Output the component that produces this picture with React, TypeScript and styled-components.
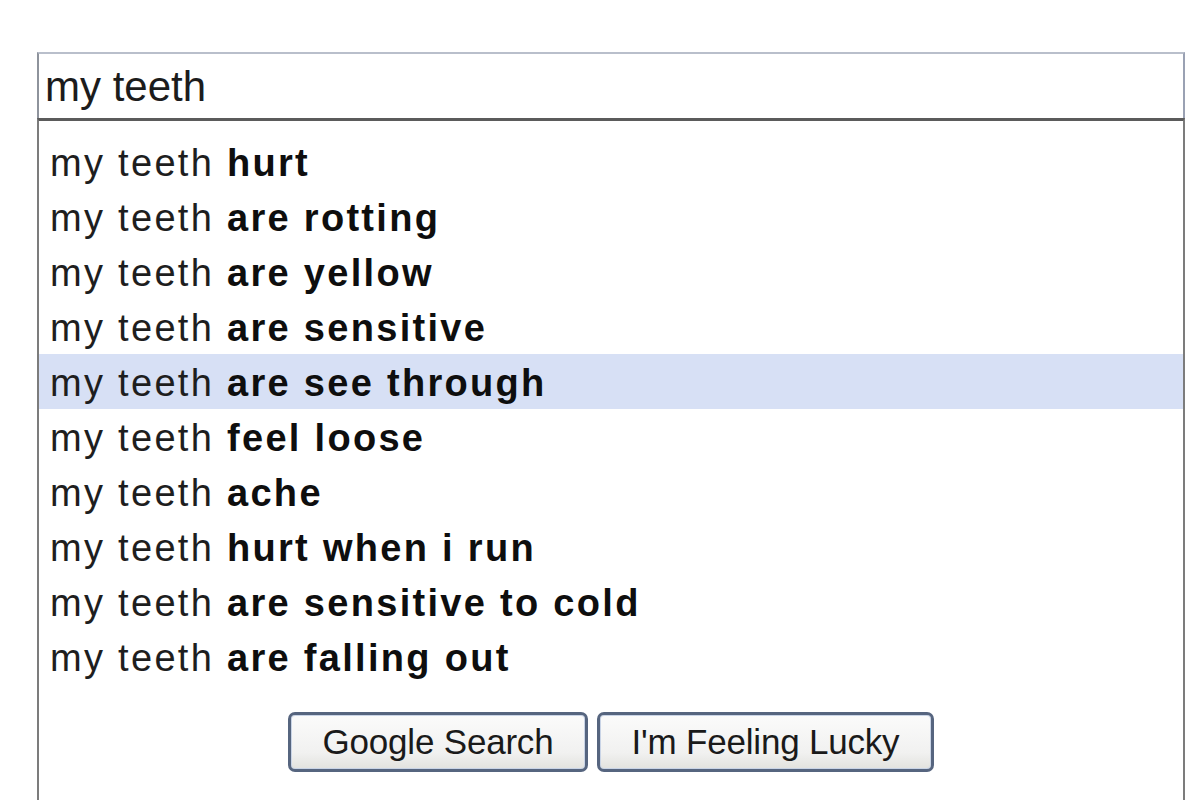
import styled, { createGlobalStyle } from "styled-components";

const GlobalStyle = createGlobalStyle`
  html, body {
    margin: 0;
    padding: 0;
    background: #ffffff;
    overflow: hidden;
  }
  body {
    font-family: "Liberation Sans", Arial, sans-serif;
  }
`;

const Page = styled.div`
  width: 1200px;
  height: 805px;
  padding: 52px 0 0 37px;
  box-sizing: border-box;
`;

const SearchBox = styled.div`
  width: 1148px;
  display: flex;
  flex-direction: column;
`;

const Query = styled.div`
  height: 66px;
  box-sizing: border-box;
  border-top: 2px solid #b9bfcb;
  border-left: 2px solid #8e939c;
  border-right: 2px solid #9aa1b3;
  padding: 2px 0 0 6px;
  display: flex;
  align-items: center;
  font-size: 42px;
  color: #1c1c1c;
`;

const Dropdown = styled.div`
  height: 682px;
  box-sizing: border-box;
  border-top: 3px solid #5b5b5b;
  border-left: 2px solid #7c7c7c;
  border-right: 2px solid #7c7c7c;
  padding-top: 13px;
  display: flex;
  flex-direction: column;
`;

const Suggestion = styled.div<{ $active?: boolean }>`
  height: 55px;
  line-height: 55px;
  padding-left: 11px;
  padding-top: 2px;
  box-sizing: border-box;
  font-size: 38px;
  letter-spacing: 2.3px;
  color: #1e1e1e;
  background: ${(p) => (p.$active ? "#d7e0f5" : "transparent")};
  white-space: nowrap;

  b {
    color: #0e0e0e;
    font-weight: 700;
  }
`;

const Buttons = styled.div`
  display: flex;
  justify-content: center;
  gap: 9px;
  margin-top: 28px;
`;

const Button = styled.button<{ $w: number }>`
  width: ${(p) => p.$w}px;
  height: 60px;
  box-sizing: border-box;
  border: 3px solid #56657f;
  border-radius: 7px;
  background: linear-gradient(#fbfbfb, #f1f1f0 70%, #e2e2de);
  box-shadow: inset 0 0 0 1px #c9d4e6;
  font-family: "Liberation Sans", Arial, sans-serif;
  font-size: 35px;
  color: #1a1a1a;
  padding: 0;
  letter-spacing: -0.2px;
`;

const suggestions: [string, boolean?][] = [
  ["hurt"],
  ["are rotting"],
  ["are yellow"],
  ["are sensitive"],
  ["are see through", true],
  ["feel loose"],
  ["ache"],
  ["hurt when i run"],
  ["are sensitive to cold"],
  ["are falling out"],
];

const App = () => {
  return (
    <>
      <GlobalStyle />
      <Page>
        <SearchBox>
          <Query>my teeth</Query>
          <Dropdown>
            {suggestions.map(([rest, active]) => (
              <Suggestion key={rest} $active={active}>
                my teeth <b>{rest}</b>
              </Suggestion>
            ))}
            <Buttons>
              <Button $w={300}>Google Search</Button>
              <Button $w={337}>I'm Feeling Lucky</Button>
            </Buttons>
          </Dropdown>
        </SearchBox>
      </Page>
    </>
  );
};

export default App;
